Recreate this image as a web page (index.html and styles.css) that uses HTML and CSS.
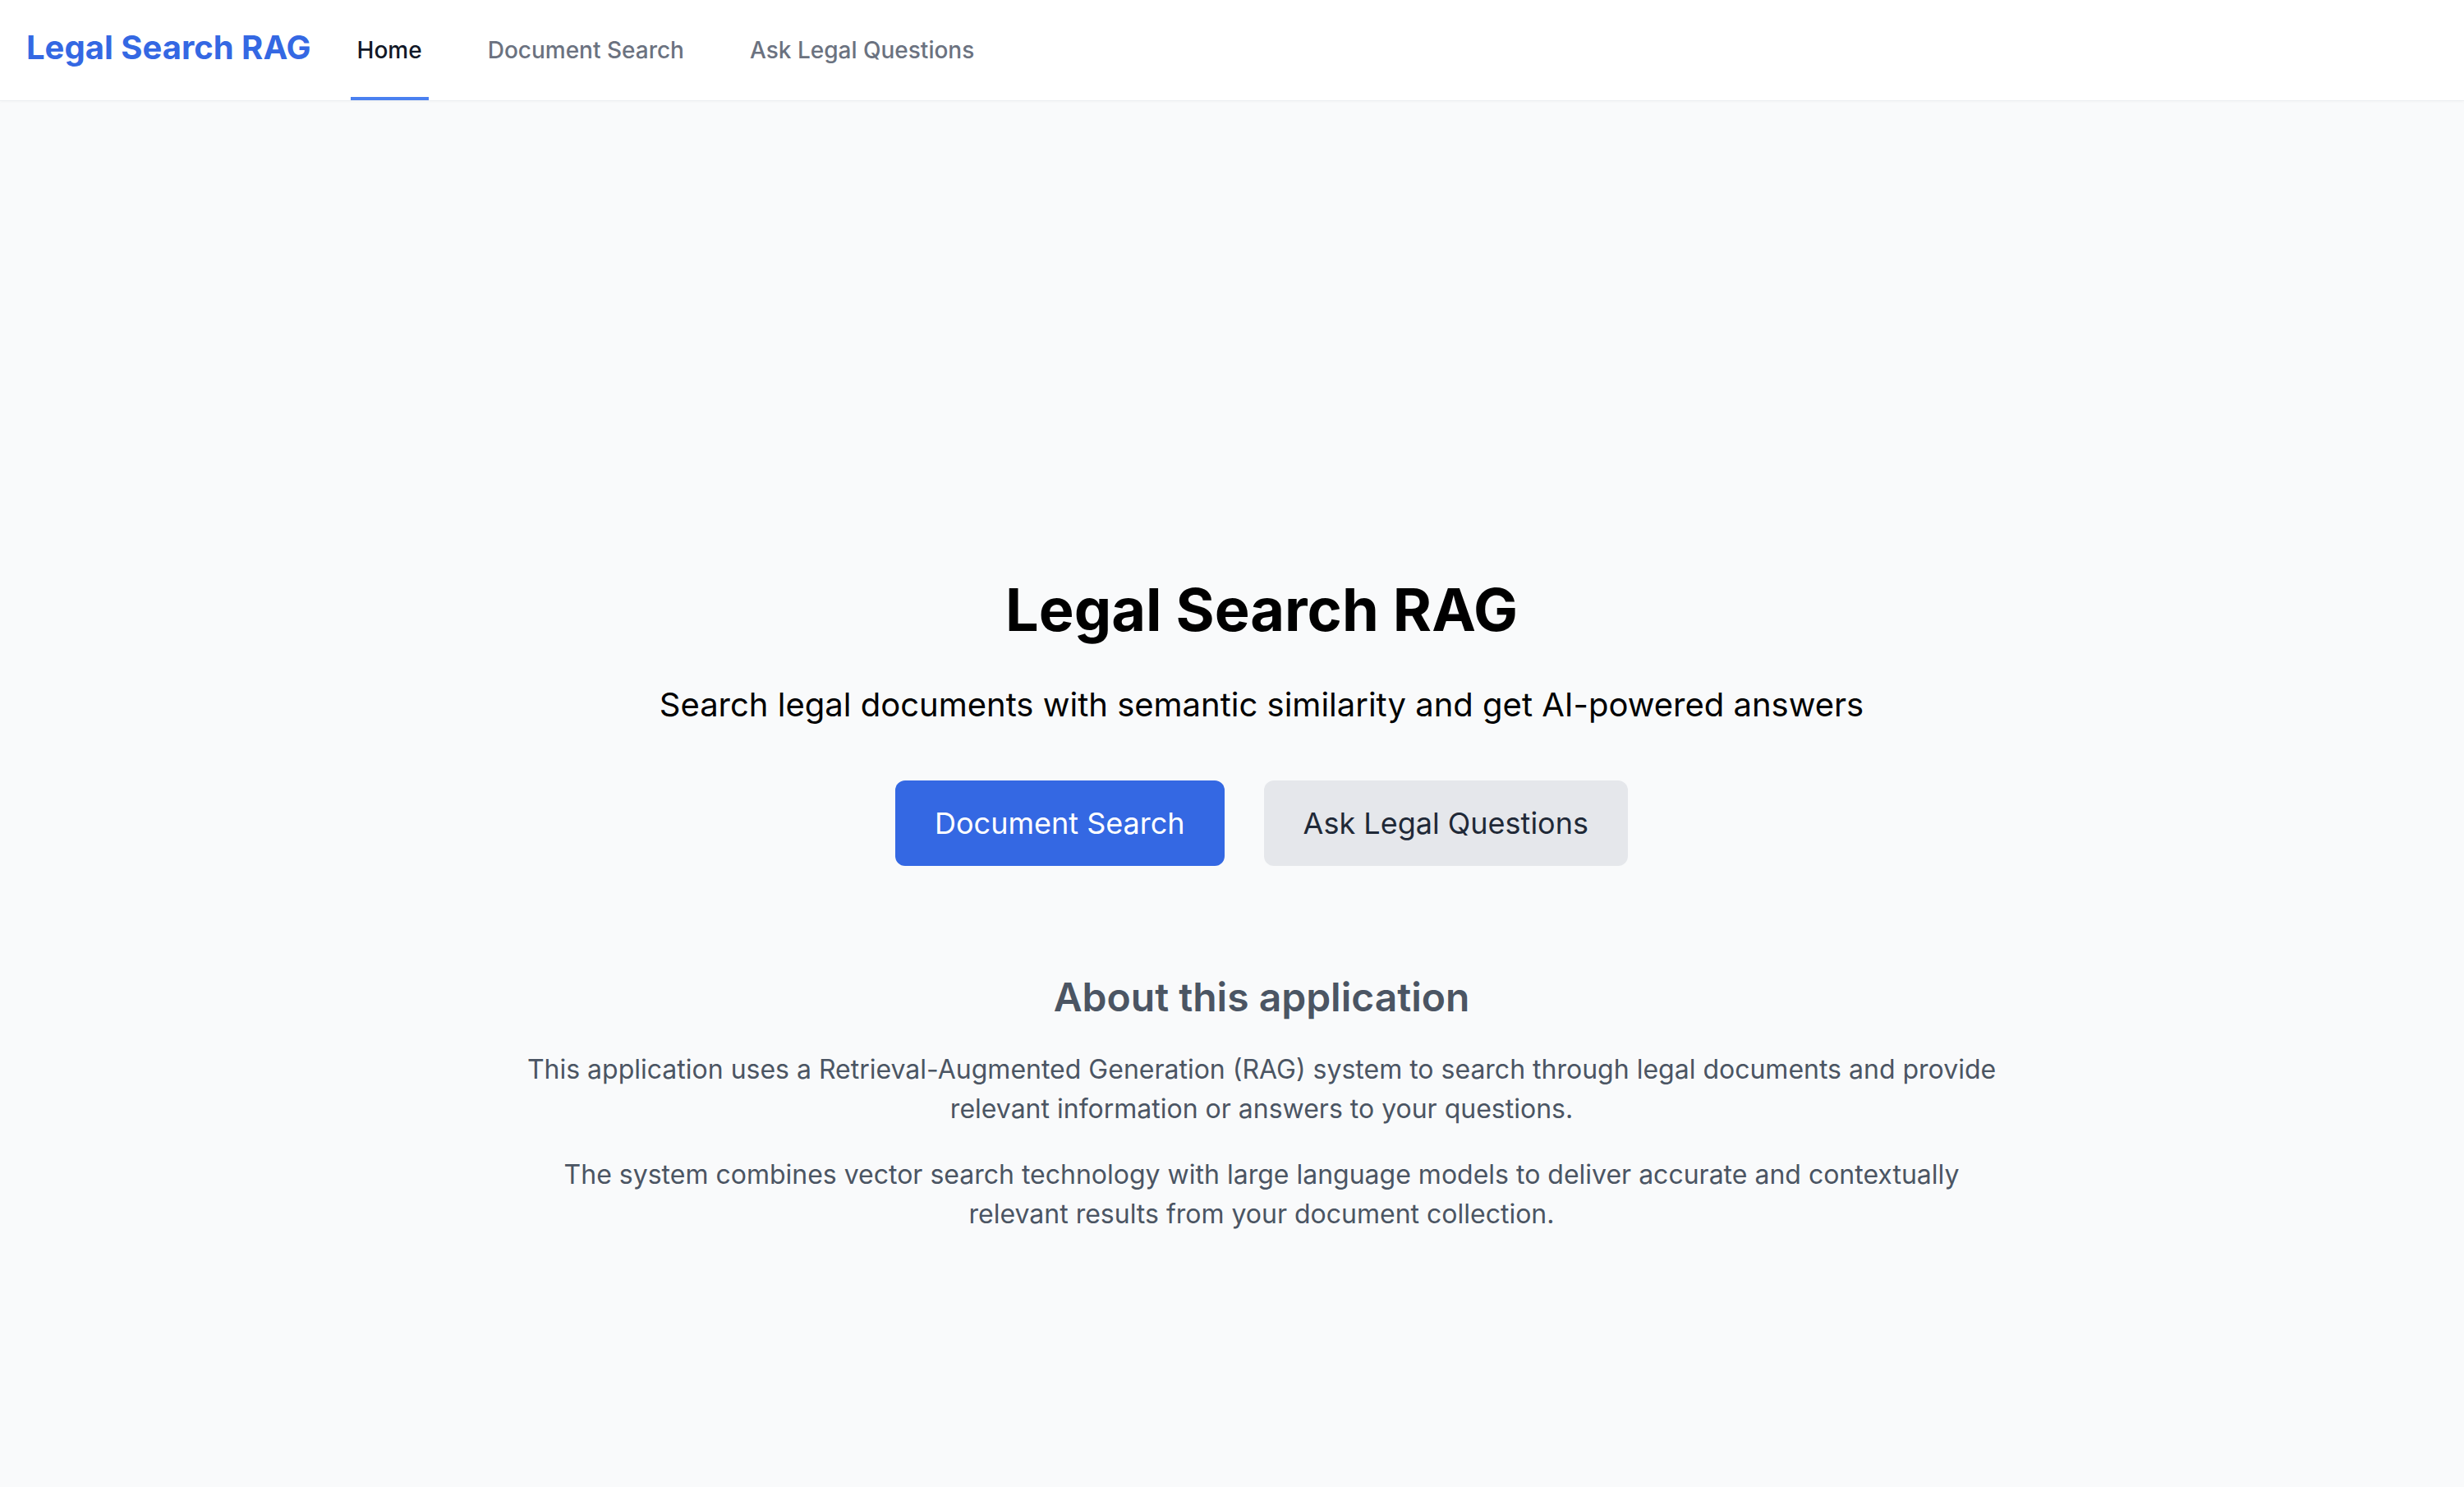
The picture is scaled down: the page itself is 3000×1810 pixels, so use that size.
FILE: index.html
```html
<!DOCTYPE html>
<html lang="en">
<head>
<meta charset="utf-8">
<title>Legal Search RAG</title>
<link rel="stylesheet" href="styles.css">
</head>
<body>
  <nav class="navbar">
    <a class="brand" href="#">Legal Search RAG</a>
    <div class="nav-links">
      <a class="nav-link active" href="#">Home</a>
      <a class="nav-link" href="#">Document Search</a>
      <a class="nav-link" href="#">Ask Legal Questions</a>
    </div>
  </nav>
  <main class="main">
    <section class="hero">
      <h1 class="hero-title">Legal Search RAG</h1>
      <p class="hero-subtitle">Search legal documents with semantic similarity and get AI-powered answers</p>
      <div class="hero-actions">
        <a class="btn btn-primary" href="#">Document Search</a>
        <a class="btn btn-secondary" href="#">Ask Legal Questions</a>
      </div>
      <div class="about">
        <h2 class="about-title">About this application</h2>
        <p class="about-text">This application uses a Retrieval-Augmented Generation (RAG) system to search through legal documents and provide relevant information or answers to your questions.</p>
        <p class="about-text">The system combines vector search technology with large language models to deliver accurate and contextually relevant results from your document collection.</p>
      </div>
    </section>
  </main>
</body>
</html>
```

FILE: styles.css
```css
* { box-sizing: border-box; }

html, body {
  margin: 0;
  padding: 0;
}

body {
  font-family: Inter, "Noto Sans", "Liberation Sans", sans-serif;
  background: #f9fafb;
  color: #000;
  min-height: 1810px;
  overflow: hidden;
}

a { text-decoration: none; }

.navbar {
  height: 122px;
  background: #ffffff;
  display: flex;
  align-items: center;
  padding-left: 32px;
  box-shadow: 0 1px 0 #eceef1, 0 2px 4px rgba(0, 0, 0, 0.03);
  position: relative;
  z-index: 1;
}

.brand {
  font-size: 40px;
  line-height: 56px;
  font-weight: 700;
  color: #3468e3;
  padding-bottom: 7px;
}

.nav-links {
  display: flex;
  align-self: stretch;
  gap: 64px;
  margin-left: 48px;
}

.nav-link {
  display: flex;
  align-items: center;
  padding: 4px 8px 0;
  font-size: 28px;
  line-height: 40px;
  font-weight: 500;
  color: #6b7280;
  border-bottom: 4px solid transparent;
}

.nav-link.active {
  color: #111827;
  border-bottom-color: #4a80f0;
}

.main {
  padding-top: 580px;
  padding-left: 72px;
}

.hero {
  display: flex;
  flex-direction: column;
  align-items: center;
  text-align: center;
}

.hero-title {
  margin: 0 0 48px;
  font-size: 72px;
  line-height: 80px;
  font-weight: 700;
  color: #000;
}

.hero-subtitle {
  margin: 0 0 64px;
  font-size: 40px;
  line-height: 56px;
  color: #000;
}

.hero-actions {
  display: flex;
  gap: 48px;
}

.btn {
  display: inline-block;
  padding: 24px 48px;
  font-size: 36px;
  line-height: 56px;
  border-radius: 12px;
}

.btn-primary {
  background: #3468e3;
  color: #ffffff;
}

.btn-secondary {
  background: #e5e7eb;
  color: #1f2937;
}

.about {
  margin-top: 128px;
  max-width: 1792px;
  display: flex;
  flex-direction: column;
  align-items: center;
}

.about-title {
  margin: 0 0 32px;
  font-size: 48px;
  line-height: 64px;
  font-weight: 600;
  color: #4b5563;
}

.about-text {
  margin: 0 0 32px;
  font-size: 32px;
  line-height: 48px;
  color: #4b5563;
}
```
